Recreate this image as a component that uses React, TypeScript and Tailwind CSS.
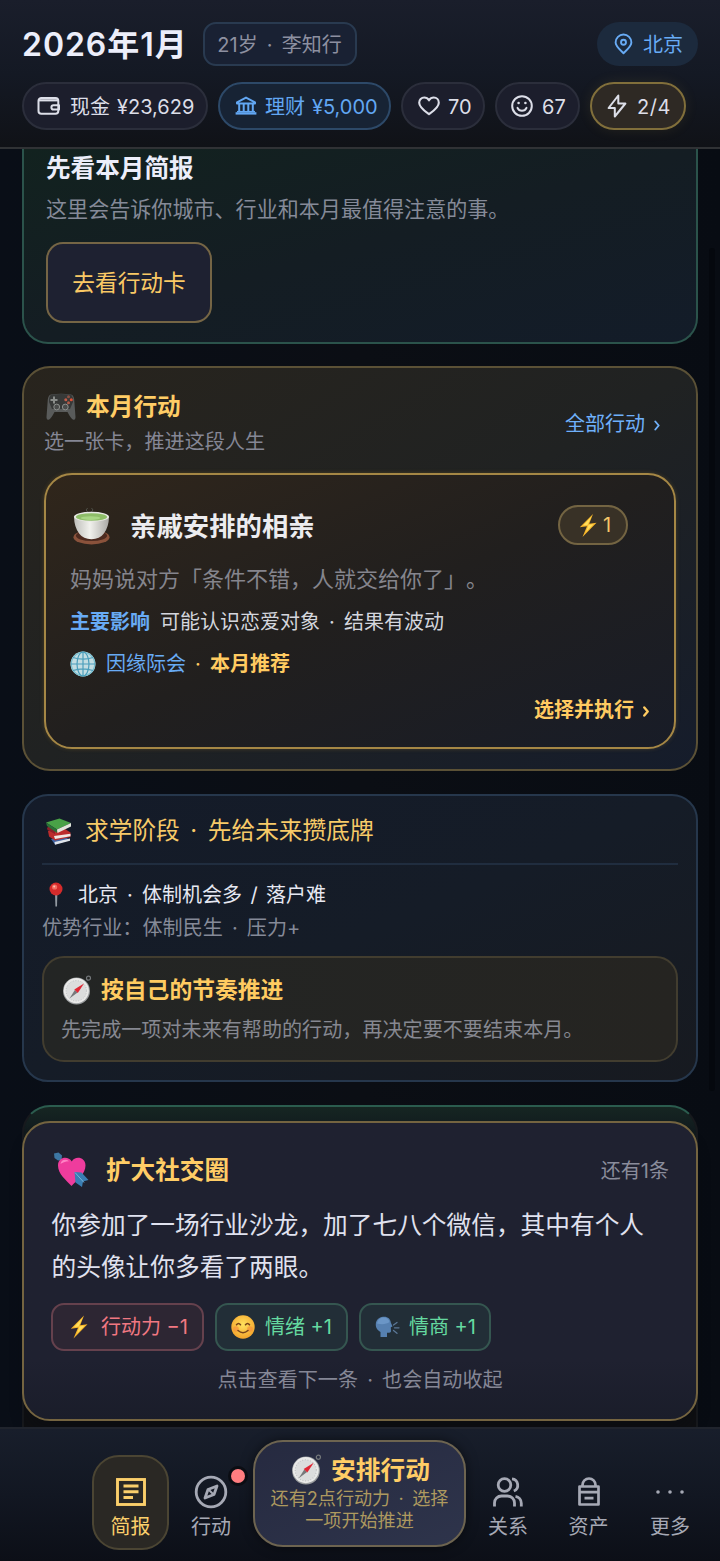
import type { ReactNode } from "react";

function Dot({ className = "w-[24px]" }: { className?: string }) {
  return <span className={`inline-block text-center ${className}`}>·</span>;
}

/* ---------- line icons ---------- */

function WalletIcon() {
  return (
    <svg width="24" height="20" viewBox="0 0 24 20" fill="none" stroke="currentColor" strokeWidth="2" strokeLinejoin="round">
      <path d="M4.500 2H18.500a2.800 2.800 0 0 1 2.800 2.800V15a2.800 2.800 0 0 1-2.800 2.800H4.300A2.800 2.800 0 0 1 1.500 15V4.800A2.800 2.800 0 0 1 4.500 2z" />
      <path d="M2 4.300h19" strokeWidth="2.200" />
      <path d="M22 9.300h-5.500a2.100 2.100 0 0 0 0 4.200H22z" />
    </svg>
  );
}

function BankIcon() {
  return (
    <svg width="22" height="20" viewBox="0 0 22 20" fill="none" stroke="currentColor" strokeWidth="2" strokeLinejoin="round">
      <path d="M2 6.300 11 1.600l9 4.700v1.200H2z" />
      <path d="M4.200 8v7.500M8.700 8v7.500M13.300 8v7.500M17.800 8v7.500" />
      <path d="M.6 17.400h20.800" strokeWidth="2.400" />
      <path d="M2 15.600h18" strokeWidth="1.400" />
    </svg>
  );
}

function HeartIcon() {
  return (
    <svg width="22" height="20" viewBox="0 0 22 20" fill="none" stroke="currentColor" strokeWidth="2.100" strokeLinejoin="round">
      <path d="M11 18.200C8.700 16.500 1.200 11.600 1.200 6.700 1.200 3.700 3.400 1.500 6.200 1.500c2 0 3.700 1 4.800 2.800C12.100 2.500 13.800 1.500 15.800 1.500c2.800 0 5 2.200 5 5.200 0 4.900-7.500 9.800-9.800 11.500z" />
    </svg>
  );
}

function SmileIcon() {
  return (
    <svg width="22" height="22" viewBox="0 0 22 22" fill="none" stroke="currentColor" strokeWidth="2" strokeLinecap="round">
      <circle cx="11" cy="11" r="9.800" />
      <path d="M6.500 12.800a4.900 4.900 0 0 0 9 0" />
      <circle cx="7.600" cy="8" r="1.300" fill="currentColor" stroke="none" />
      <circle cx="14.400" cy="8" r="1.300" fill="currentColor" stroke="none" />
    </svg>
  );
}

function BoltIcon() {
  return (
    <svg width="20" height="24" viewBox="0 0 20 24" fill="none" stroke="currentColor" strokeWidth="2" strokeLinejoin="round">
      <path d="M11.300 1.500 1.600 14h6.200v8.500L18.400 9.500h-7.100z" />
    </svg>
  );
}

function PinIcon() {
  return (
    <svg width="19" height="22" viewBox="0 0 20 22" fill="none" stroke="currentColor" strokeWidth="2" strokeLinejoin="round">
      <path d="M10 20.700C6.800 17.400 1.700 13.300 1.700 9.300a8.300 8.300 0 0 1 16.600 0c0 4-5.100 8.100-8.300 11.400z" />
      <circle cx="10" cy="9.200" r="2.600" />
    </svg>
  );
}

function BriefIcon() {
  return (
    <svg width="30" height="28" viewBox="0 0 30 28" fill="none" stroke="currentColor" strokeWidth="2.900">
      <rect x="1.500" y="1.500" width="27" height="25" />
      <path d="M7.500 8h15M7.500 13.700h15M7.500 19.500h9.500" />
    </svg>
  );
}

function CompassIcon() {
  return (
    <svg width="34" height="34" viewBox="0 0 34 34" fill="none" stroke="currentColor" strokeWidth="2.800" strokeLinejoin="round">
      <circle cx="17" cy="17" r="14.800" />
      <path d="M23 11 20 19.500 11 23 14 14.500z" />
      <path d="m14.500 14.500 5 5" strokeWidth="2" />
    </svg>
  );
}

function PeopleIcon() {
  return (
    <svg width="30" height="30" viewBox="0 0 30 30" fill="none" stroke="currentColor" strokeWidth="2.800">
      <circle cx="11.500" cy="8" r="6.300" />
      <path d="M1.500 29.500V26a7 7 0 0 1 7-7h6a7 7 0 0 1 7 7v3.500" />
      <path d="M19 1.900a6.300 6.300 0 0 1 1.800 12.100" />
      <path d="M22.500 19.300a7 7 0 0 1 5.800 6.900v3.300" />
    </svg>
  );
}

function AssetIcon() {
  return (
    <svg width="24" height="30" viewBox="0 0 24 30" fill="none" stroke="currentColor" strokeWidth="2.700" strokeLinejoin="round">
      <path d="M5.500 9.500V8a6.500 6.500 0 0 1 13 0v1.500" />
      <rect x="2.500" y="9.500" width="19" height="18" />
      <path d="M2 15.200h20M7.500 21.200h9" />
    </svg>
  );
}

function MoreIcon() {
  return (
    <svg width="30" height="6" viewBox="0 0 30 6" fill="currentColor">
      <circle cx="3" cy="3" r="1.800" />
      <circle cx="15" cy="3" r="1.800" />
      <circle cx="27" cy="3" r="1.800" />
    </svg>
  );
}

function Chevron({ className = "" }: { className?: string }) {
  return (
    <svg className={className} width="6" height="11" viewBox="0 0 6 11" fill="none" stroke="currentColor" strokeLinecap="round" strokeLinejoin="round">
      <path d="M1.300 1.500 4.700 5.500l-3.400 4" />
    </svg>
  );
}

/* ---------- colour pictograms ---------- */

function Gamepad() {
  return (
    <svg width="30" height="28" viewBox="0 0 30 28">
      <path d="M5 1.500Q15 0 25 1.500q2.500.5 3.200 5L29.500 24q0 3-2.200 2.800Q25 26 21.500 19h-13Q5 26 2.700 26.800.5 27 .5 24L1.800 6.500Q2.500 2 5 1.500z" fill="#595b5a" />
      <path d="M5.500 1.500Q15 .5 24.500 1.500 27.500 3 27 9L24 16H6L3 9Q2.500 3 5.500 1.500z" fill="#373938" />
      <path d="M8 3.500v7M4.500 7h7" stroke="#8a8d8a" strokeWidth="2" />
      <circle cx="22.500" cy="3.800" r="1.500" fill="#8b5145" />
      <circle cx="19.800" cy="6.800" r="1.500" fill="#c65d48" />
      <circle cx="25.300" cy="6.800" r="1.500" fill="#df5136" />
      <circle cx="22.500" cy="9.800" r="1.500" fill="#b35a48" />
      <circle cx="10.700" cy="14" r="2.900" fill="#4a4c4b" stroke="#8d908d" strokeWidth="1" />
      <circle cx="19.300" cy="14" r="2.900" fill="#4a4c4b" stroke="#8d908d" strokeWidth="1" />
    </svg>
  );
}

function Tea() {
  return (
    <svg width="37" height="37" viewBox="0 0 38 38">
      <defs>
        <linearGradient id="cup" x1="0" x2="1">
          <stop offset="0" stopColor="#bdbdb9" />
          <stop offset=".45" stopColor="#f1f1ed" />
          <stop offset="1" stopColor="#aaa9a5" />
        </linearGradient>
      </defs>
      <path d="M15 4q-3-2 0-4M19 4q3-2 0-4" stroke="#69716a" strokeWidth="1" fill="none" opacity=".6" />
      <ellipse cx="19" cy="30" rx="18.500" ry="7.500" fill="#8a523b" />
      <ellipse cx="19" cy="28.500" rx="16" ry="5.500" fill="#4d2b20" />
      <path d="M1 9h36q-.3 11-5.500 17.500Q27.500 32 19 32T6.500 26.500Q1.300 20 1 9z" fill="url(#cup)" />
      <ellipse cx="19" cy="9" rx="18" ry="5.200" fill="#e7e8e2" />
      <ellipse cx="19" cy="9.300" rx="16" ry="3.900" fill="#8ebd68" />
      <ellipse cx="18" cy="10.300" rx="10" ry="1.900" fill="#a8d684" />
    </svg>
  );
}

function Globe() {
  return (
    <svg width="26" height="26" viewBox="0 0 26 26">
      <circle cx="13" cy="13" r="12.500" fill="#c3dde2" />
      <g fill="none" stroke="#4b9ebb" strokeWidth="1.200">
        <circle cx="13" cy="13" r="11.700" stroke="#77bfd0" />
        <ellipse cx="13" cy="13" rx="6" ry="12" />
        <path d="M13 .8v24.400M1 13h24M3 6.500q10 3.200 20 0M3 19.500q10-3.200 20 0" />
      </g>
    </svg>
  );
}

function Books() {
  return (
    <svg width="27" height="27" viewBox="0 0 27 27">
      <path d="m6 21 15-1.500 4 2.500-15 4.500z" fill="#3f65a5" />
      <path d="m9.500 24 15.500-3.500v2.200L10 26.800z" fill="#e0e4ea" />
      <path d="m3 13 17-2 5.500 3.500V19L10 22.500l-6-4z" fill="#bc2c2c" />
      <path d="m9 18 16.500-2.200v2.400L10 21z" fill="#f0e7e2" />
      <path d="m2 10 2-2 6 4v4L2.500 12z" fill="#8c2129" />
      <path d="M1 4.500 14.500.5 26 5 12 11.500z" fill="#49a247" />
      <path d="m1 4.500 11 7V15L2 8z" fill="#2b7137" />
      <path d="M12 11.500 26 5v3.500L12.500 15z" fill="#e2e6dc" />
    </svg>
  );
}

function PushPin() {
  return (
    <svg width="14" height="26" viewBox="0 0 14 26">
      <path d="M6 10h2.400l-.4 14.500H6.400z" fill="#9299a1" />
      <circle cx="7" cy="7" r="6.500" fill="#d52b2b" />
      <circle cx="5.600" cy="5" r="2.600" fill="#f26d62" />
      <circle cx="5.200" cy="4.500" r="1" fill="#ffc0b5" />
    </svg>
  );
}

function CompassEmoji({ className }: { className: string }) {
  return (
    <svg className={className} viewBox="0 0 30 30">
      <circle cx="26.500" cy="3.200" r="2" fill="none" stroke="#73777a" strokeWidth="1.200" />
      <circle cx="14.500" cy="16" r="13.500" fill="#9a9d9f" />
      <circle cx="14.300" cy="15.600" r="12.600" fill="#e9e9e8" />
      <circle cx="14.300" cy="15.800" r="10.200" fill="#dcdddd" stroke="#bec0c2" strokeWidth="1" strokeDasharray="1 1.600" />
      <path d="m7.500 23.500 5.300-8.500 2.800 2.500z" fill="#77797b" />
      <path d="m22 8.500-9.700 6 3.500 3.500z" fill="#df2634" />
    </svg>
  );
}

function CupidHeart() {
  return (
    <svg width="36" height="36" viewBox="0 0 36 36">
      <path d="M5 5 30 30" stroke="#6c7f98" strokeWidth="1.700" />
      <path d="M1 1.500 5.500.5 9 3.500 8.500 8 5 8.500 1.500 6z" fill="#3d77a3" />
      <path d="M18.500 34C13 28 5 22 5 13.500c0-8.500 10-10 13.800-4C22 3.500 32.500 5 32.500 13.500 32.500 22 24 28 18.500 34z" fill="#ef3c9d" />
      <path d="M7.500 12c.5-4 5-5.500 8.500-2.800-4 .2-6.500 1.500-8.500 2.800z" fill="#ff83c4" />
      <path d="m21.500 20 7 .5L35.500 28 30 29.500 29 35l-6.500-4.500z" fill="#3a7eb3" />
      <path d="m22 20.500 9 10" stroke="#79b4da" strokeWidth="1" />
    </svg>
  );
}

function BoltEmoji({ className }: { className: string }) {
  return (
    <svg className={className} viewBox="0 0 18 24">
      <path d="M14 .5.800 13.800l7.200-1L3.500 23.500 17.500 9.300l-7.300 1z" fill="#f7b62a" />
      <path d="M12.500 3 4 12l5.500-.6L7 18.500l7.500-7.800-6 .9z" fill="#ffdf5d" />
    </svg>
  );
}

function SmileEmoji() {
  return (
    <svg width="24" height="24" viewBox="0 0 24 24">
      <defs>
        <radialGradient id="face" cx=".5" cy=".4" r=".6">
          <stop offset="0" stopColor="#ffe25e" />
          <stop offset="1" stopColor="#f3a32b" />
        </radialGradient>
      </defs>
      <circle cx="12" cy="12" r="11.700" fill="url(#face)" />
      <circle cx="5" cy="14" r="2.800" fill="#f58a3b" opacity=".6" />
      <circle cx="19" cy="14" r="2.800" fill="#f58a3b" opacity=".6" />
      <g fill="none" stroke="#77431a" strokeWidth="1.500" strokeLinecap="round">
        <path d="M5.500 9.800q2-2.800 4 0M14.500 9.800q2-2.800 4 0M7 15.500q5 4.500 10 0" />
      </g>
    </svg>
  );
}

function SpeakingHead() {
  return (
    <svg width="25" height="22" viewBox="0 0 25 22">
      <path d="M8 .8c4.500-.5 7.500 2 7.800 5.700l1.700 4-1.700.8.200 4c0 1.500-2.500 1.500-4 1.400V21H5.500v-5C2.500 14.500.5 11.500.8 8 1 4 4 1.200 8 .8z" fill="#5680b0" />
      <path d="M8 1.500c3.500-.3 6 1.500 6.500 4.500-3 2-7 3-12.500 1.500C2.500 4 5 1.800 8 1.500z" fill="#6b96c6" />
      <path d="m18.500 9 3.500-2.500M19.500 11.800H24M18.500 14.500l3.500 2.800" stroke="#5b7796" strokeWidth="1.300" strokeLinecap="round" />
    </svg>
  );
}

/* ---------- pieces ---------- */

function Stat({ icon, className, children }: { icon: ReactNode; className: string; children: ReactNode }) {
  return (
    <div className={`flex h-[48px] shrink-0 items-center rounded-full border-2 text-[20px] whitespace-nowrap ${className}`}>
      <span className="shrink-0">{icon}</span>
      <span className="pt-px">{children}</span>
    </div>
  );
}

function Chip({ icon, className, children }: { icon: ReactNode; className: string; children: ReactNode }) {
  return (
    <div className={`flex h-[48px] items-center rounded-[13px] border-2 text-[20px] whitespace-nowrap ${className}`}>
      <span className="flex w-[26px] shrink-0 justify-center">{icon}</span>
      <span className="ml-[9px]">{children}</span>
    </div>
  );
}

function Tab({ icon, label, className }: { icon: ReactNode; label: string; className: string }) {
  return (
    <div className={`flex h-[95px] shrink-0 flex-col items-center ${className}`}>
      <span className="flex h-[34px] items-center">{icon}</span>
      <span className="mt-px text-[20px] leading-[34px]">{label}</span>
    </div>
  );
}

function Header() {
  return (
    <header className="h-[149px] shrink-0 border-b-2 border-[#303235] bg-linear-to-b from-[#1a1e2b] via-[#141924] to-[#101217] px-[22px] pt-[22px]">
      <div className="flex h-[44px] items-center">
        <h1 className="w-[181px] pt-px text-[32px] font-semibold tracking-[0.950px] whitespace-nowrap text-[#eceefa]">2026年1月</h1>
        <div className="flex h-[44px] w-[154px] items-center justify-center rounded-[13px] border-2 border-[#293a50] bg-[#192133] pt-px pr-px text-[20px] whitespace-nowrap text-[#8d90a0]">
          21岁
          <Dot className="w-[24px]" />
          李知行
        </div>
        <div className="ml-auto flex h-[44px] w-[101px] items-center gap-[10px] rounded-full bg-[#1c2a3d] pl-[17px] text-[20px] text-[#68abf5]">
          <PinIcon />
          <span className="pt-px">北京</span>
        </div>
      </div>
      <div className="mt-[16px] flex gap-[10px] text-[#dcdee8]">
        <Stat icon={<WalletIcon />} className="w-[186px] gap-[9px] border-[#2b2e3b] bg-[#1c1e2c] pl-[13px]">
          现金<span className="ml-[7px]">¥23,629</span>
        </Stat>
        <Stat icon={<BankIcon />} className="w-[173px] gap-[8px] border-[#2d4968] bg-[#172334] pl-[15px] text-[#62a7f3]">
          理财<span className="ml-[7px]">¥5,000</span>
        </Stat>
        <Stat icon={<HeartIcon />} className="w-[84px] gap-[8px] border-[#2b2e3b] bg-[#1c1e2c] pl-[15px]">70</Stat>
        <Stat icon={<SmileIcon />} className="w-[85px] gap-[9px] border-[#2b2e3b] bg-[#1c1e2c] pl-[14px]">67</Stat>
        <Stat icon={<BoltIcon />} className="w-[96px] gap-[10px] border-[#816f3b] bg-[#2e2924] pl-[15px] tracking-[0.500px] shadow-[0_0_14px_#e0b04018]">2/4</Stat>
      </div>
    </header>
  );
}

function BriefCard() {
  return (
    <section className="h-[195px] shrink-0 rounded-b-[26px] border-2 border-t-0 border-[#2b534b] bg-linear-to-br from-[#12221f] via-[#141d23] to-[#131c29] pl-[22px]">
      <h2 className="h-[37px] pt-px text-[24.600px] leading-[37px] font-semibold text-[#eceefa]">先看本月简报</h2>
      <p className="h-[46px] text-[21.070px] leading-[47px] text-[#858a98]">这里会告诉你城市、行业和本月最值得注意的事。</p>
      <button className="mt-[10px] h-[81px] w-[166px] rounded-[17px] border-2 border-[#756545] bg-[#1e2131] pt-[2px] text-[22.700px] text-[#fac965]">
        去看行动卡
      </button>
    </section>
  );
}

function ActionsCard() {
  return (
    <section className="mt-[22px] h-[405px] shrink-0 rounded-[28px] border-2 border-[#5b5136] bg-linear-to-br from-[#28241d] via-[#202222] to-[#151c2b] px-[20px] pt-[21px]">
      <div className="flex h-[70px] items-center justify-between">
        <div>
          <div className="flex h-[36px] items-center gap-[10px] pl-[2px]">
            <Gamepad />
            <h2 className="text-[23.700px] font-semibold text-[#ffcd66]">本月行动</h2>
          </div>
          <p className="h-[34px] text-[20.100px] leading-[34px] text-[#858795]">选一张卡，推进这段人生</p>
        </div>
        <a className="flex items-center gap-[9px] pr-[16px] text-[20px] text-[#6fb0fa]">
          全部行动
          <Chevron className="mt-[2px] stroke-[1.900]" />
        </a>
      </div>
      <article className="mt-[14px] h-[276px] rounded-[28px] border-2 border-[#a58745] bg-linear-to-br from-[#30261b] via-[#211f1e] to-[#181c27] px-[24px] pt-[26px] shadow-[0_0_4px_#c0953040]">
        <div className="flex h-[50px] items-center pl-[3px]">
          <Tea />
          <h3 className="ml-[20px] pt-px text-[26.400px] font-semibold text-[#ececef]">亲戚安排的相亲</h3>
          <div className="-mt-[2px] mr-[22px] ml-auto flex h-[40px] w-[70px] items-center gap-[6px] rounded-full border-2 border-[#736442] bg-[#383126] pl-[19px] text-[20px] text-[#f4c568]">
            <BoltEmoji className="h-[25px] w-[18px]" />1
          </div>
        </div>
        <p className="h-[57px] text-[22px] leading-[56px] text-[#85858d]">妈妈说对方「条件不错，人就交给你了」。</p>
        <p className="h-[28px] text-[20px] leading-[28px] text-[#d4d6dd]">
          <b className="mr-[10px] font-semibold text-[#68abf5]">主要影响</b>可能认识恋爱对象
          <Dot />
          结果有波动
        </p>
        <p className="flex h-[56px] items-center text-[20px] text-[#ffcb61]">
          <Globe />
          <span className="ml-[10px] text-[#68abf5]">因缘际会</span>
          <Dot />
          <b className="font-semibold">本月推荐</b>
        </p>
        <p className="flex h-[36px] items-center justify-end gap-[9px] pr-px text-[20px] font-semibold text-[#ffcb61]">
          选择并执行
          <Chevron className="mt-[2px] stroke-[2.400]" />
        </p>
      </article>
    </section>
  );
}

function StageCard() {
  return (
    <section className="mt-[23px] h-[288px] shrink-0 rounded-[26px] border-2 border-[#26374c] bg-linear-to-br from-[#141b29] via-[#151c27] to-[#171a20] px-[18px]">
      <div className="flex h-[69px] items-center border-b-2 border-[#202d3f] pt-[3px] pl-[3px] text-[23.700px] text-[#f7ca68]">
        <Books />
        <h2 className="ml-[13px]">
          求学阶段
          <Dot className="w-[28px]" />
          先给未来攒底牌
        </h2>
      </div>
      <div className="mt-[14px] flex h-[32px] items-center pl-[7px] text-[20px] text-[#e6e8f2]">
        <PushPin />
        <p className="ml-[15px]">
          北京
          <Dot />
          体制机会多<span className="inline-block w-[24px] text-center">/</span>落户难
        </p>
      </div>
      <p className="h-[34px] text-[20.100px] leading-[34px] text-[#858a98]">
        优势行业：体制民生
        <Dot />
        压力+
      </p>
      <div className="mt-[11px] h-[106px] rounded-[22px] border-2 border-[#423d2f] bg-linear-to-r from-[#232524] to-[#252421] px-[17px] pt-[15px]">
        <div className="flex h-[34px] items-center">
          <CompassEmoji className="ml-[1px] h-[30px] w-[30px]" />
          <h3 className="ml-[9px] text-[22.800px] font-semibold text-[#ffcb61]">按自己的节奏推进</h3>
        </div>
        <p className="h-[46px] text-[20.100px] leading-[47px] text-[#868891]">先完成一项对未来有帮助的行动，再决定要不要结束本月。</p>
      </div>
    </section>
  );
}

function EventCard() {
  return (
    <section className="mt-[23px] h-[420px] shrink-0 rounded-[28px] border-2 border-x-[#17191d] border-t-[#2b5c4e] border-b-transparent bg-linear-to-b from-[#162622] from-0% via-[#111b1e] via-5% to-[#0e0f12] to-15%">
      <article className="-mx-[2px] mt-[14px] h-[300px] rounded-[28px] border-2 border-[#746440] bg-linear-to-b from-[#1f2130] from-80% to-[#1a1d2a] px-[27px] pt-[25px] shadow-[0_14px_16px_-6px_#090b0f80]">
        <div className="flex h-[44px] items-center pl-[2px]">
          <CupidHeart />
          <h2 className="ml-[17px] pt-px text-[24.600px] font-semibold text-[#ffcd66]">扩大社交圈</h2>
          <span className="ml-auto pt-px text-[20px] text-[#8a8c9b]">还有1条</span>
        </div>
        <p className="mt-[12px] ml-[0.500px] w-[600px] text-[24.700px] leading-[42px] text-[#e0e2ef]">
          你参加了一场行业沙龙，加了七八个微信，其中有个人的头像让你多看了两眼。
        </p>
        <div className="mt-[15px] flex gap-[11px]">
          <Chip icon={<BoltEmoji className="h-[24px] w-[18px]" />} className="w-[153px] border-[#65414d] bg-[#2d2633] pl-[13px] text-[#f17882]">行动力 −1</Chip>
          <Chip icon={<SmileEmoji />} className="w-[133px] border-[#355650] bg-[#222e37] pl-[13px] text-[#65d9a0]">情绪 +1</Chip>
          <Chip icon={<SpeakingHead />} className="w-[132px] border-[#355650] bg-[#222e37] pl-[13px] text-[#65d9a0]">情商 +1</Chip>
        </div>
        <p className="mt-[12px] h-[34px] text-center text-[20.100px] leading-[35px] text-[#858796]">
          点击查看下一条
          <Dot />
          也会自动收起
        </p>
      </article>
    </section>
  );
}

function BottomBar() {
  return (
    <nav className="flex h-[134px] shrink-0 border-t-2 border-[#20242d] bg-linear-to-b from-[#181e2b] via-[#121722] to-[#0c0f17] pl-[92px] text-[#a6a9b5]">
      <Tab icon={<BriefIcon />} label="简报" className="mt-[26px] w-[77px] rounded-[27px] border-2 border-[#4b4533] bg-[#2a2824] pt-[18px] text-[#fbcf6b]" />
      <div className="relative">
        <Tab icon={<CompassIcon />} label="行动" className="mt-[26px] w-[84px] pt-[20px]" />
        <span className="absolute top-[40px] right-[8px] h-[14px] w-[14px] rounded-full bg-[#ff7d80] shadow-[0_0_0_3px_#0b0d13]" />
      </div>
      <button className="mt-[11px] flex h-[107px] w-[213px] shrink-0 flex-col items-center rounded-[30px] border-2 border-[#6d6450] bg-linear-to-br from-[#262a40] to-[#2e344b] pt-[12px] shadow-[0_0_12px_#00000080]">
        <span className="flex h-[33px] items-center gap-[9px] pl-[2px] text-[24.700px] font-semibold text-[#ffcd66]">
          <CompassEmoji className="-mt-[3px] h-[31px] w-[31px]" />
          安排行动
        </span>
        <span className="block text-[18.100px] leading-[22px] whitespace-nowrap text-[#ad995f]">
          还有2点行动力
          <Dot className="w-[22px]" />
          选择
          <br />
          一项开始推进
        </span>
      </button>
      <Tab icon={<PeopleIcon />} label="关系" className="mt-[26px] w-[84px] pt-[20px]" />
      <Tab icon={<AssetIcon />} label="资产" className="mt-[26px] w-[77px] pt-[20px]" />
      <Tab icon={<MoreIcon />} label="更多" className="mt-[26px] w-[86px] pt-[20px]" />
    </nav>
  );
}

export default function App() {
  return (
    <div
      className="relative flex h-[1561px] w-[720px] flex-col overflow-hidden bg-[#0b0e15] font-['Inter','Noto_Sans_CJK_SC',sans-serif] [text-spacing-trim:space-all]"
      lang="zh-CN"
    >
      <Header />
      <main className="flex min-h-0 flex-1 flex-col overflow-hidden bg-linear-to-r from-[#090e17] via-[#0b0e14] to-[#080c13] px-[22px]">
        <BriefCard />
        <ActionsCard />
        <StageCard />
        <EventCard />
      </main>
      <BottomBar />
      <span className="absolute top-[248px] right-[5px] h-[843px] w-[6px] rounded-full bg-[#05080e]" />
    </div>
  );
}
